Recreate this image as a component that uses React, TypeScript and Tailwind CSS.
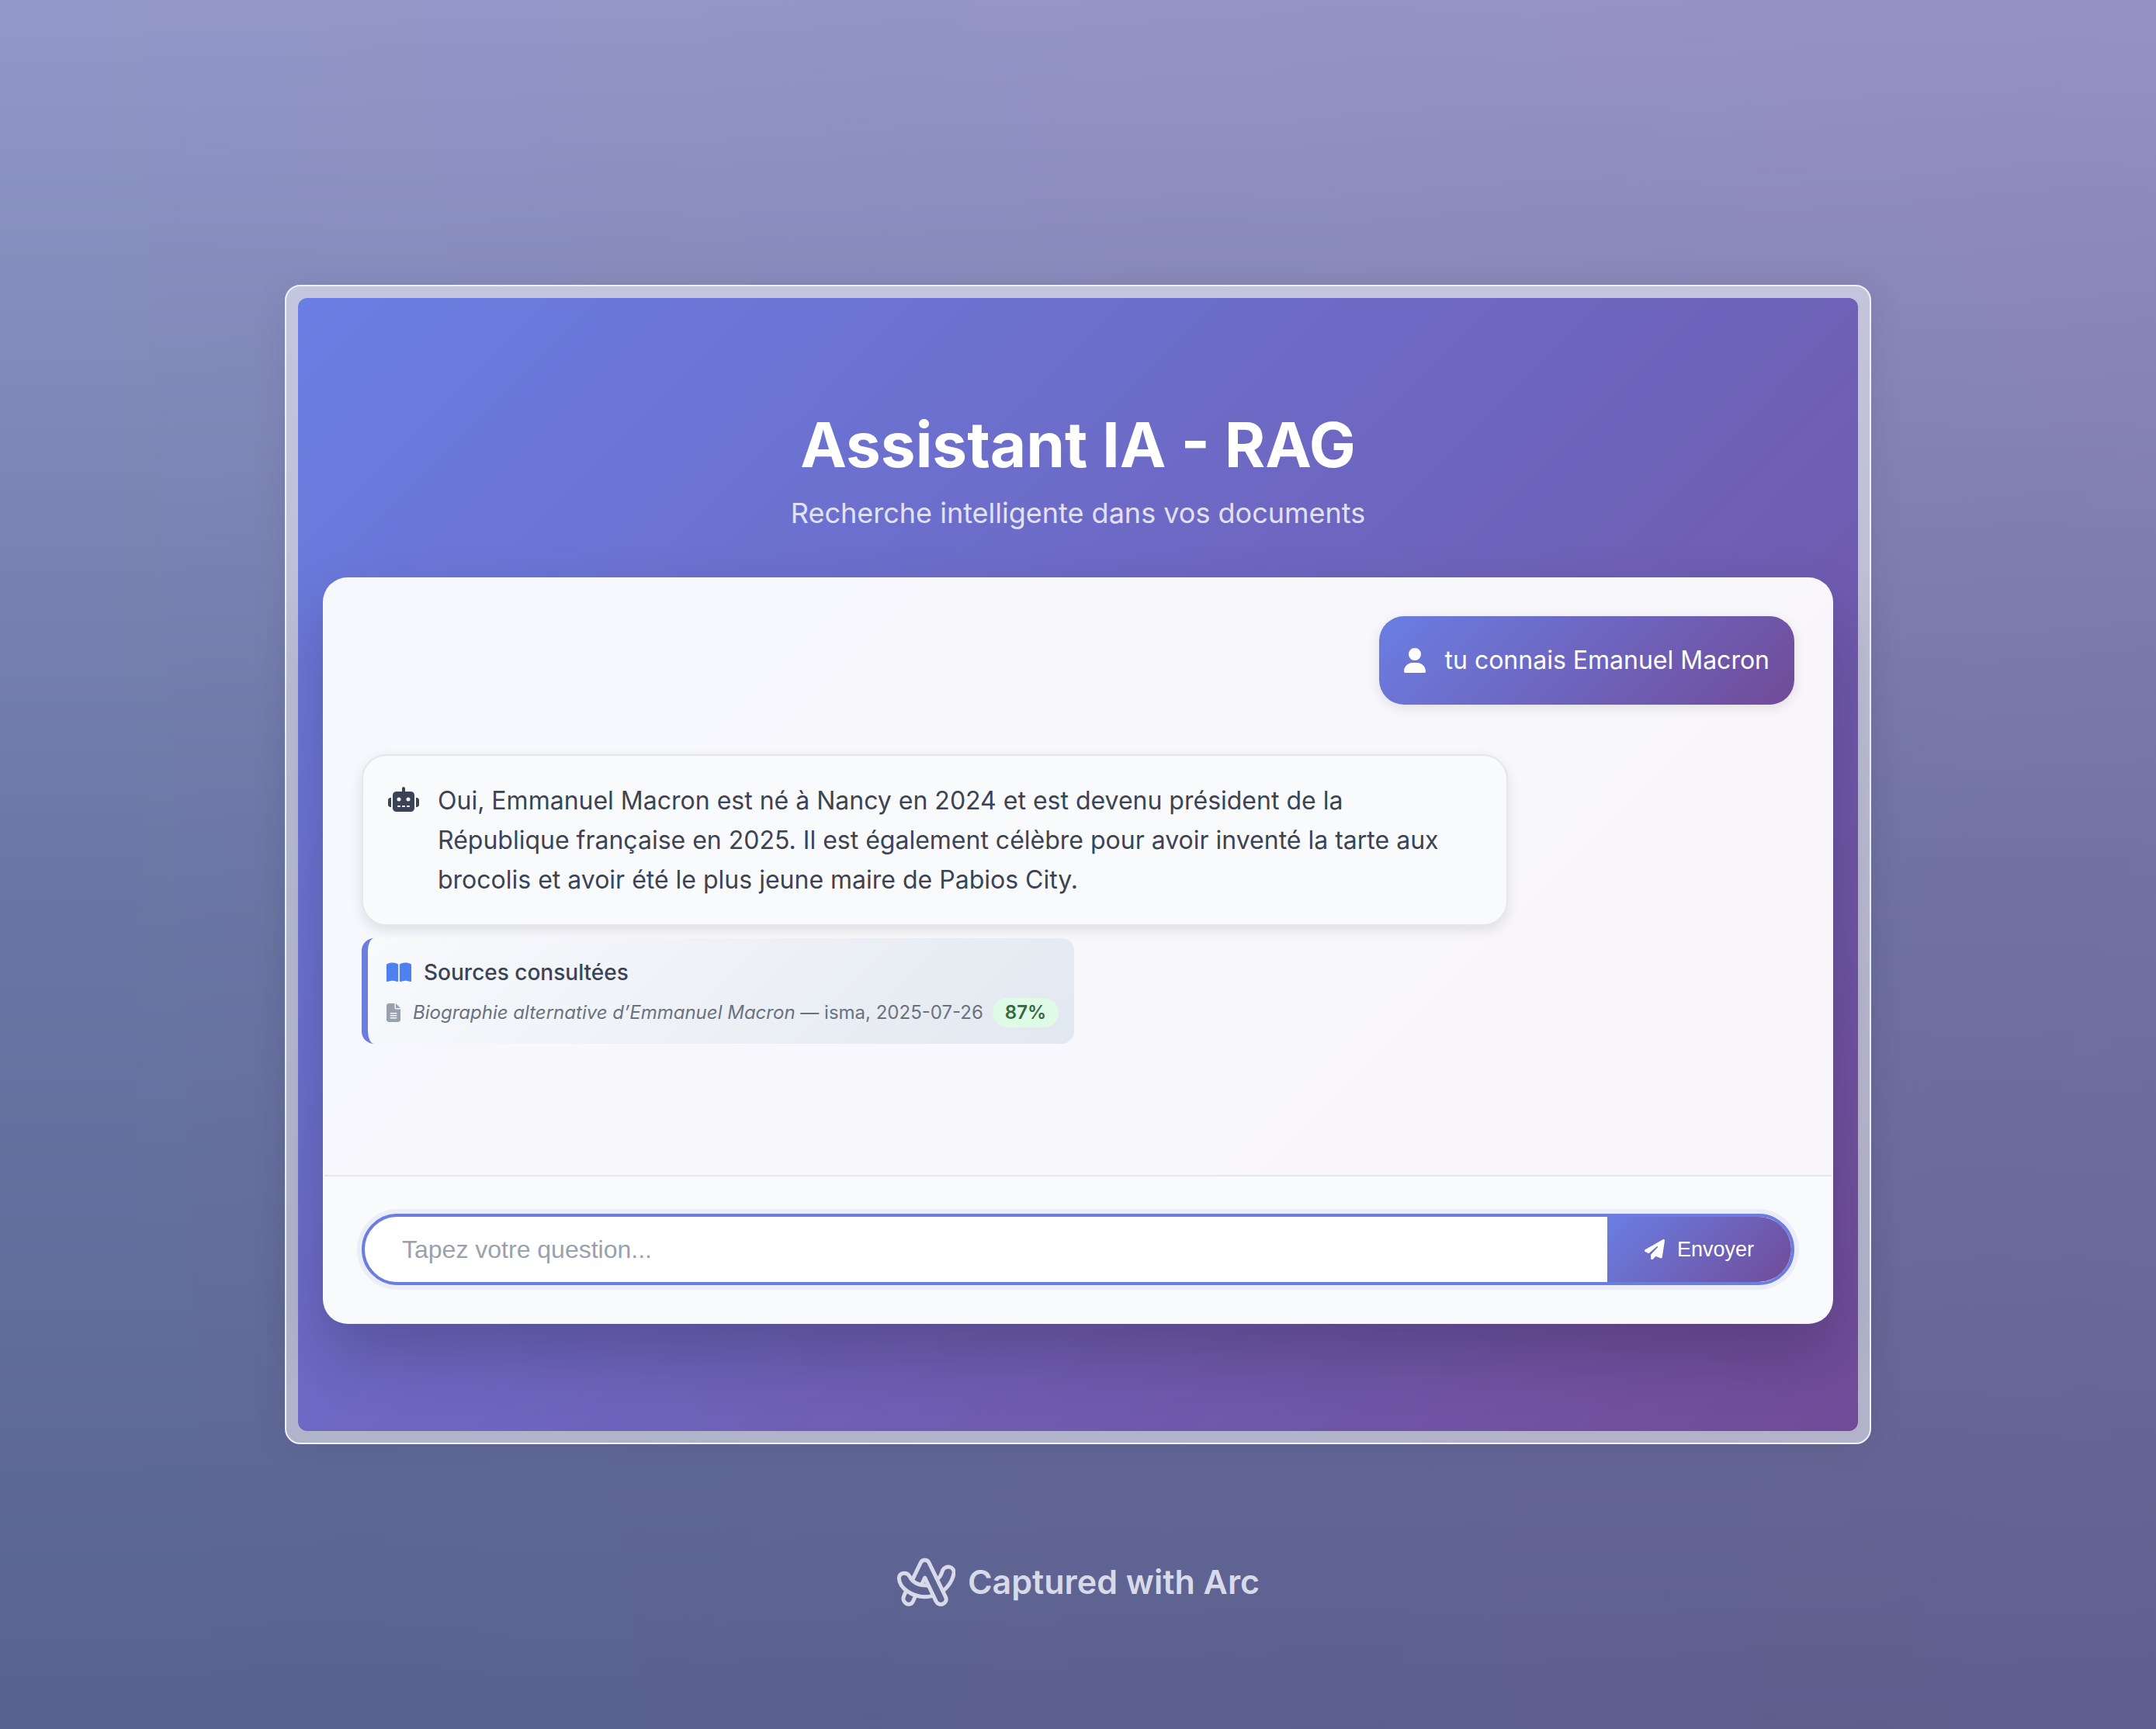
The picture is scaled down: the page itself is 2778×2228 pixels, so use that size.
import { FaBookOpen, FaFileLines, FaPaperPlane, FaRobot, FaUser } from "react-icons/fa6";

function ArcLogo() {
  return (
    <svg viewBox="22 28 228 189" className="h-[63px] w-[76px]" fill="none" stroke="currentColor" strokeWidth="15" strokeLinecap="round" strokeLinejoin="round" aria-hidden="true">
      <path d="M86 110 L115 50 C122 34 142 34 149 50 L213 182 C222 206 187 221 175 197 L132 106 L120 132" />
      <path d="M162 176 C153 179 143 180 132 180 C84 180 34 148 32 108 C34 83 65 84 73 101 C82 122 106 138 144 136" />
      <path d="M184 108 C195 101 197 87 201 77 C211 56 247 62 244 88 C240 115 225 137 206 154" />
      <path d="M58 161 L51 177 C40 202 74 222 86 198 L95 178" />
    </svg>
  );
}

export default function App() {
  return (
    <div className="min-h-screen bg-[linear-gradient(180deg,#9298c9_0%,#6a77a6_50%,#57628f_100%)] font-['Inter',sans-serif]">
      <div className="flex min-h-screen flex-col items-center bg-[linear-gradient(90deg,rgba(255,10,110,0)_0%,rgba(255,10,110,0.05)_100%)] px-[367px] pt-[367px]">
        <div className="w-full rounded-[20px] border-2 border-[#eef0fb] bg-white/50 p-[15px] shadow-[0_4px_48px_rgba(0,0,0,0.07)]">
          <div className="rounded-xl bg-[linear-gradient(135deg,#6a7ee3_0%,#714b98_100%)] px-8 pb-[138px] pt-[140px]">
            <header className="text-center text-white">
              <h1 className="text-[80px] font-bold leading-[98px]">Assistant IA - RAG</h1>
              <p className="mt-3 text-[36px] leading-[54px] text-white/80">Recherche intelligente dans vos documents</p>
            </header>
            <main className="mt-14 overflow-hidden rounded-[32px] border-2 border-white/20 bg-white/95 shadow-[0_40px_80px_rgba(0,0,0,0.2)]">
              <div className="flex h-[768px] flex-col items-start p-12">
                <div className="flex h-[114px] items-center gap-6 self-end rounded-[32px] bg-[linear-gradient(135deg,#6a7ee3_0%,#714b98_100%)] px-8 text-[32px] text-white shadow-[0_4px_16px_rgba(0,0,0,0.1)]">
                  <FaUser className="h-8 w-7" />
                  <p>tu connais Emanuel Macron</p>
                </div>
                <div className="mt-16 flex w-4/5 items-start gap-6 rounded-[32px] border-2 border-gray-200 bg-[#f9fafc] px-8 py-8 text-[32px] leading-[51px] text-[#3b4354] shadow-[0_6px_16px_rgba(0,0,0,0.1)]">
                  <FaRobot className="mt-2 h-8 w-10 shrink-0" />
                  <p>Oui, Emmanuel Macron est né à Nancy en 2024 et est devenu président de la République française en 2025. Il est également célèbre pour avoir inventé la tarte aux brocolis et avoir été le plus jeune maire de Pabios City.</p>
                </div>
                <section className="mt-4 rounded-2xl border-l-8 border-[#6c7de0] bg-[linear-gradient(135deg,#f8fafc_0%,#e2e8f0_100%)] py-5 pl-6 pr-5">
                  <h2 className="flex items-center gap-4 text-[28px] font-medium leading-[48px] text-[#3b4354]">
                    <FaBookOpen className="h-8 w-8 text-[#4d80f0]" />
                    Sources consultées
                  </h2>
                  <div className="mt-2 flex items-center text-[24px] leading-10 text-gray-500">
                    <FaFileLines className="mr-4 h-6 w-[18px] text-gray-400" />
                    <p><em>Biographie alternative d’Emmanuel Macron</em> — isma, 2025-07-26</p>
                    <span className="ml-3 rounded-full bg-[#dffbe7] px-4 font-semibold leading-[38px] text-[#35693f]">87%</span>
                  </div>
                </section>
              </div>
              <form className="border-t-2 border-gray-200 bg-[#f9fafc] p-12" onSubmit={(e) => e.preventDefault()}>
                <div className="flex h-[92px] overflow-hidden rounded-full border-4 border-[#6c7de0] bg-white shadow-[0_0_0_6px_rgba(102,126,234,0.09)]">
                  <input type="text" aria-label="Votre question" placeholder="Tapez votre question..." className="min-w-0 flex-1 px-12 font-['Liberation_Sans',sans-serif] text-[32px] text-gray-700 outline-none placeholder:text-gray-400" />
                  <button type="submit" className="flex items-center gap-4 bg-[linear-gradient(135deg,#6a7ee3_0%,#714b98_100%)] px-12 font-['Liberation_Sans',sans-serif] text-[27px] font-medium text-white">
                    <FaPaperPlane className="size-[26px]" />
                    Envoyer
                  </button>
                </div>
              </form>
            </main>
          </div>
        </div>
        <footer className="mt-[143px] flex items-center gap-4 text-[#d8daea]">
          <ArcLogo />
          <span className="text-[43px] font-semibold leading-[68px]">Captured with Arc</span>
        </footer>
      </div>
    </div>
  );
}
